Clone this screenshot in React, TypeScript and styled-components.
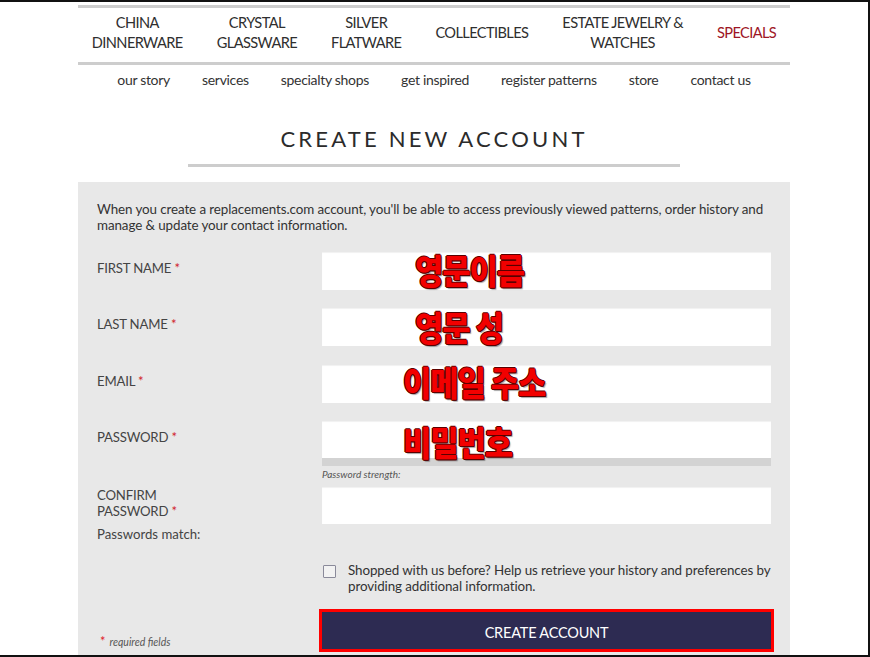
import React from "react";
import styled, { createGlobalStyle } from "styled-components";

const GlobalStyle = createGlobalStyle`
  html, body { margin: 0; padding: 0; background: #fff; }
  body { font-family: Lato, "Noto Sans", "Liberation Sans", sans-serif; }
  * { box-sizing: border-box; }
`;

const Frame = styled.div`
  width: 870px;
  height: 657px;
  overflow: hidden;
  background: #fff;
  border-top: 2px solid #111;
  border-right: 2px solid #111;
  border-bottom: 2px solid #111;
`;

const Column = styled.div`
  width: 712px;
  margin-left: 78px;
`;

const Rule = styled.div<{ $top?: number }>`
  height: 3px;
  background: #cdcdcd;
  margin-top: ${(p) => p.$top ?? 0}px;
`;

const MainNav = styled.nav`
  display: flex;
  justify-content: center;
  align-items: center;
  gap: 34px;
  height: 54px;
  padding-bottom: 4px;
`;

const NavItem = styled.a<{ $accent?: boolean }>`
  text-align: center;
  font-size: 14.6px;
  line-height: 20px;
  letter-spacing: -0.6px;
  color: ${(p) => (p.$accent ? "#9e1626" : "#2f2f2f")};
  text-decoration: none;
  text-transform: uppercase;
`;

const SubNav = styled.nav`
  display: flex;
  justify-content: center;
  gap: 32px;
  padding-top: 6px;
`;

const SubItem = styled.a`
  font-size: 14px;
  line-height: 18px;
  letter-spacing: -0.3px;
  color: #333;
  text-decoration: none;
`;

const Title = styled.h1`
  margin: 35px 0 0;
  text-align: center;
  font-weight: 400;
  font-size: 22px;
  line-height: 30px;
  letter-spacing: 3.2px;
  color: #2b2b2b;
`;

const TitleRule = styled.div`
  width: 492px;
  height: 3px;
  background: #cdcdcd;
  margin: 10px auto 0;
`;

const Panel = styled.section`
  margin-top: 15px;
  background: #e8e8e8;
  padding: 19px 19px 20px;
  color: #333;
`;

const Intro = styled.p`
  margin: 0 0 19px;
  font-size: 13.4px;
  line-height: 16px;
  letter-spacing: -0.1px;
  color: #333;
`;

const Row = styled.div<{ $gap?: number }>`
  display: grid;
  grid-template-columns: 225px 449px;
  align-items: start;
  margin-bottom: ${(p) => p.$gap ?? 18}px;
`;

const LabelCol = styled.div<{ $pad?: number }>`
  padding-top: ${(p) => p.$pad ?? 8}px;
`;

const Label = styled.label`
  display: block;
  font-size: 13.2px;
  line-height: 16px;
  letter-spacing: -0.2px;
  color: #444;
  text-transform: uppercase;
`;

const Star = styled.span`
  color: #d0202a;
`;

const Note = styled.div`
  margin-top: 7px;
  font-size: 13.2px;
  line-height: 16px;
  color: #444;
`;

const InputWrap = styled.div`
  position: relative;
`;

const Input = styled.input<{ $h?: number }>`
  display: block;
  width: 100%;
  height: ${(p) => p.$h ?? 38}px;
  border: none;
  background: #fff;
  box-shadow: inset 0 1px 1px rgba(0, 0, 0, 0.06);
  outline: none;
`;

const Annotation = styled.span<{ $left: number; $top: number }>`
  position: absolute;
  left: ${(p) => p.$left}px;
  top: ${(p) => p.$top}px;
  transform: scaleX(0.9);
  transform-origin: left center;
  white-space: nowrap;
  font-family: "Noto Sans CJK KR", sans-serif;
  font-weight: 900;
  font-size: 34px;
  line-height: 40px;
  color: #f20000;
  letter-spacing: -1px;
  pointer-events: none;
  text-shadow: 1px 0 #5a0000, -1px 0 #5a0000, 0 1px #5a0000, 0 -1px #5a0000,
    1px 1px #5a0000, 2px 2px 1px rgba(0, 0, 0, 0.35);
`;

const StrengthBar = styled.div`
  height: 8px;
  background: #d3d3d3;
`;

const StrengthText = styled.div`
  margin-top: 2px;
  font-size: 10px;
  line-height: 12px;
  font-style: italic;
  color: #555;
`;

const CheckRow = styled.label`
  display: flex;
  gap: 12px;
  align-items: flex-start;
  font-size: 13.4px;
  line-height: 16px;
  letter-spacing: -0.1px;
  color: #333;
`;

const Box = styled.span`
  flex: none;
  width: 13px;
  height: 13px;
  margin: 3px 0 0 1px;
  border: 1px solid #8a8a9a;
  background: #f2f2f2;
  border-radius: 1px;
`;

const Required = styled.div`
  padding-top: 24px;
  padding-left: 3px;
  font-size: 10.5px;
  font-style: italic;
  color: #555;
  display: flex;
  align-items: baseline;
  gap: 4px;
`;

const ReqStar = styled.span`
  color: #e0202a;
  font-size: 13px;
  font-style: normal;
`;

const SubmitButton = styled.button`
  width: 449px;
  height: 37px;
  margin-top: 3px;
  padding-top: 5px;
  border: none;
  background: #2d2b52;
  color: #fff;
  font-family: Lato, "Noto Sans", sans-serif;
  font-size: 14.5px;
  letter-spacing: -0.2px;
  text-transform: uppercase;
  outline: 3px solid #ff0000;
  outline-offset: 0;
`;

const mainNav = [
  ["China", "Dinnerware"],
  ["Crystal", "Glassware"],
  ["Silver", "Flatware"],
  ["Collectibles"],
  ["Estate Jewelry &", "Watches"],
];

const subNav = [
  "our story",
  "services",
  "specialty shops",
  "get inspired",
  "register patterns",
  "store",
  "contact us",
];

type Field = { label: string; note: string; left: number; top: number; gap: number };

const fields: Field[] = [
  { label: "First Name", note: "영문이름", left: 93, top: -2, gap: 18 },
  { label: "Last Name", note: "영문 성", left: 93, top: -1, gap: 19 },
  { label: "Email", note: "이메일 주소", left: 81, top: -3, gap: 18 },
];

export default function App() {
  return (
    <>
      <GlobalStyle />
      <Frame>
        <Column>
          <Rule $top={3} />
          <MainNav>
            {mainNav.map((lines) => (
              <NavItem key={lines.join(" ")} href="#">
                {lines.map((l, i) => (
                  <React.Fragment key={l}>
                    {i > 0 && <br />}
                    {l}
                  </React.Fragment>
                ))}
              </NavItem>
            ))}
            <NavItem href="#" $accent>
              Specials
            </NavItem>
          </MainNav>
          <Rule />
          <SubNav>
            {subNav.map((s) => (
              <SubItem key={s} href="#">
                {s}
              </SubItem>
            ))}
          </SubNav>
          <Title>CREATE NEW ACCOUNT</Title>
          <TitleRule />
          <Panel>
            <Intro>
              When you create a replacements.com account, you'll be able to access previously viewed
              patterns, order history and manage &amp; update your contact information.
            </Intro>
            {fields.map((f) => (
              <Row key={f.label} $gap={f.gap}>
                <LabelCol>
                  <Label>
                    {f.label} <Star>*</Star>
                  </Label>
                </LabelCol>
                <InputWrap>
                  <Input />
                  <Annotation $left={f.left} $top={f.top}>
                    {f.note}
                  </Annotation>
                </InputWrap>
              </Row>
            ))}
            <Row $gap={7}>
              <LabelCol>
                <Label>
                  Password <Star>*</Star>
                </Label>
              </LabelCol>
              <div>
                <InputWrap>
                  <Input type="password" $h={37} />
                  <Annotation $left={81} $top={1}>
                    비밀번호
                  </Annotation>
                </InputWrap>
                <StrengthBar />
                <StrengthText>Password strength:</StrengthText>
              </div>
            </Row>
            <Row $gap={20}>
              <LabelCol $pad={0}>
                <Label>
                  Confirm
                  <br />
                  Password <Star>*</Star>
                </Label>
                <Note>Passwords match:</Note>
              </LabelCol>
              <Input type="password" $h={37} />
            </Row>
            <Row $gap={15}>
              <div />
              <CheckRow>
                <Box />
                <span>
                  Shopped with us before? Help us retrieve your history and preferences by providing
                  additional information.
                </span>
              </CheckRow>
            </Row>
            <Row>
              <Required>
                <ReqStar>*</ReqStar>
                <span>required fields</span>
              </Required>
              <SubmitButton type="button">Create Account</SubmitButton>
            </Row>
          </Panel>
        </Column>
      </Frame>
    </>
  );
}
